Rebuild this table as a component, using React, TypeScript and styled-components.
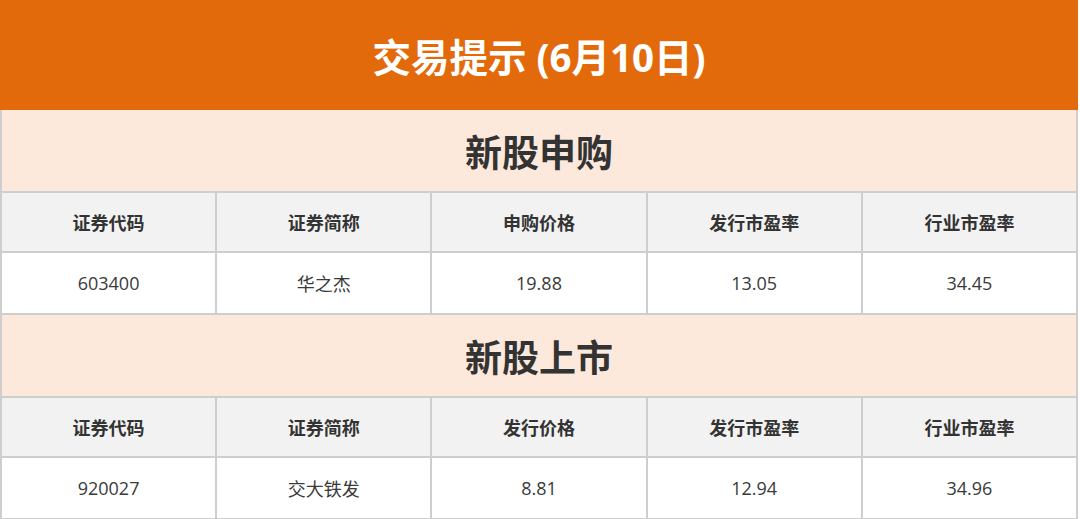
import React from "react";
import styled, {createGlobalStyle} from "styled-components";

const GlobalStyle = createGlobalStyle`
  html, body {
    margin: 0;
    padding: 0;
    background: #ffffff;
  }
  body {
    font-family: "Open Sans", "Noto Sans CJK SC", sans-serif;
    color: #333333;
  }
`;

const Page = styled.div`
  width: 1078px;
  display: flex;
  flex-direction: column;
`;

const Banner = styled.div`
  height: 110px;
  background: #e36a0b;
  color: #ffffff;
  display: flex;
  align-items: center;
  justify-content: center;
  font-size: 38.5px;
  font-weight: 700;
  font-family: "Open Sans", "Noto Sans CJK SC", sans-serif;
`;

const Section = styled.div`
  display: flex;
  flex-direction: column;
`;

const SectionTitle = styled.div`
  height: 81px;
  background: #fde9dc;
  border: 2px solid #cecece;
  border-top: none;
  display: flex;
  align-items: center;
  justify-content: center;
  font-size: 37px;
  font-weight: 700;
  color: #333333;
  font-family: "Noto Sans CJK SC", sans-serif;
`;

const Row = styled.div<{ $head?: boolean }>`
  display: grid;
  grid-template-columns: repeat(5, 1fr);
  height: ${p => (p.$head ? 58 : 60)}px;
  background: ${p => (p.$head ? "#f2f2f2" : "#ffffff")};
  border-left: 2px solid #cecece;
  border-bottom: 2px solid #cecece;
`;

const Cell = styled.div<{ $head?: boolean }>`
  display: flex;
  align-items: center;
  justify-content: center;
  border-right: 2px solid #cecece;
  font-size: 18px;
  font-weight: ${p => (p.$head ? 700 : 400)};
  color: ${p => (p.$head ? "#333333" : "#3a3a3a")};
  font-family: ${p =>
    p.$head ? `"Noto Sans CJK SC", sans-serif` : `"Open Sans", "Noto Sans CJK SC", sans-serif`};
`;

const sections = [
    {
        title: "新股申购",
        head: ["证券代码", "证券简称", "申购价格", "发行市盈率", "行业市盈率"],
        row: ["603400", "华之杰", "19.88", "13.05", "34.45"],
    },
    {
        title: "新股上市",
        head: ["证券代码", "证券简称", "发行价格", "发行市盈率", "行业市盈率"],
        row: ["920027", "交大铁发", "8.81", "12.94", "34.96"],
    },
];

export default function App() {
    return (
        <Page>
            <GlobalStyle/>
            <Banner>交易提示 (6月10日)</Banner>
            {sections.map(s => (
                <Section key={s.title}>
                    <SectionTitle>{s.title}</SectionTitle>
                    <Row $head>
                        {s.head.map((h, i) => <Cell $head key={i}>{h}</Cell>)}
                    </Row>
                    <Row>
                        {s.row.map((v, i) => <Cell key={i}>{v}</Cell>)}
                    </Row>
                </Section>
            ))}
        </Page>
    );
}
